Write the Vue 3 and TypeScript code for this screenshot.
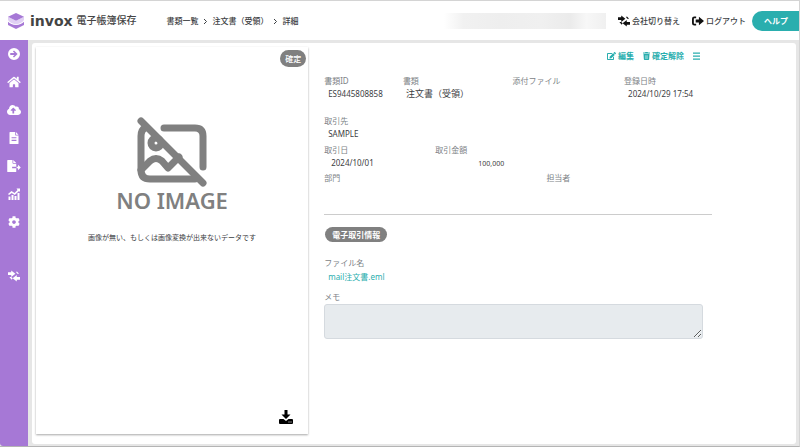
<script setup lang="ts">
interface NavItem {
  name: string
  box: string
  path: string
  wide?: boolean
  apart?: boolean
}

const swapPath =
  'M0 4h7V0l9 7-9 7v-4H0zM26 14v6h-7v4l-9-7 9-7v4zM3 14h4l3 3-2 3zM17 3l3 4h4l-4-4z'

const navItems: NavItem[] = [
  {
    name: '開く',
    box: '0 0 24 24',
    path: 'M12 0a12 12 0 1 0 0 24a12 12 0 0 0 0-24zM4.500 10.200h8.500l-3.200-3.200L12 4.800l7.200 7.200-7.200 7.200-2.200-2.200 3.200-3.200H4.500z',
  },
  {
    name: 'ホーム',
    box: '0 0 576 512',
    wide: true,
    path: 'M280.37 148.26L96 300.11V464a16 16 0 0 0 16 16l112.06-.29a16 16 0 0 0 15.92-16V368a16 16 0 0 1 16-16h64a16 16 0 0 1 16 16v95.64a16 16 0 0 0 16 16.05L464 480a16 16 0 0 0 16-16V300L295.67 148.26a12.19 12.19 0 0 0-15.3 0zM571.6 251.47L488 182.56V44.05a12 12 0 0 0-12-12h-56a12 12 0 0 0-12 12v72.61L318.47 43a48 48 0 0 0-61 0L4.34 251.47a12 12 0 0 0-1.6 16.9l25.5 31A12 12 0 0 0 45.15 301l235.22-193.74a12.19 12.19 0 0 1 15.3 0L530.9 301a12 12 0 0 0 16.9-1.6l25.5-31a12 12 0 0 0-1.7-16.93z',
  },
  {
    name: 'アップロード',
    box: '0 0 640 512',
    wide: true,
    path: 'M537.6 226.6c4.1-10.7 6.4-22.4 6.4-34.6 0-53-43-96-96-96-19.7 0-38.1 6-53.3 16.2C367 64.2 315.3 32 256 32c-88.4 0-160 71.6-160 160 0 2.7.1 5.4.2 8.1C40.2 219.8 0 273.2 0 336c0 79.5 64.5 144 144 144h368c70.7 0 128-57.3 128-128 0-61.9-44-113.6-102.4-125.4zM393.4 288H328v112c0 8.8-7.2 16-16 16h-48c-8.8 0-16-7.2-16-16V288h-65.4c-14.3 0-21.400-17.200-11.300-27.300l105.400-105.400c6.200-6.200 16.400-6.200 22.600 0l105.400 105.400c10.100 10.100 2.900 27.300-11.300 27.300z',
  },
  {
    name: '書類',
    box: '-64 0 512 512',
    path: 'M24 0h216v120c0 14 10 24 24 24h120v344c0 13-11 24-24 24H24c-13 0-24-11-24-24V24C0 11 11 0 24 0zM272 0l112 112H272zM88 220v50h208v-50zM88 330v50h208v-50z',
  },
  {
    name: '出力',
    box: '0 0 576 512',
    wide: true,
    path: 'M24 0h200v128c0 18 14 32 32 32h128v128H208v64h176v136c0 13-11 24-24 24H24c-13 0-24-11-24-24V24C0 11 11 0 24 0zM256 0l128 128H256zM400 288h60v-82l116 114-116 114v-82h-60z',
  },
  {
    name: '集計',
    box: '0 0 24 24',
    path: 'M1 17h4v7H1zM7 14h4v10H7zM13 16h4v8h-4zM19 10h4v14h-4zM0 12l7-6 6 4 6-6-2-3h7v7l-2-2-8.500 8-6-4L2 14z',
  },
  {
    name: '設定',
    box: '0 0 512 512',
    path: 'M487.4 315.7l-42.6-24.6c4.3-23.2 4.3-47 0-70.2l42.6-24.6c4.9-2.8 7.1-8.6 5.5-14-11.1-35.6-30-67.8-54.7-94.6-3.8-4.1-10-5.1-14.8-2.3L380.8 110c-17.9-15.4-38.5-27.3-60.8-35.1V25.8c0-5.6-3.9-10.5-9.4-11.7-36.7-8.2-74.3-7.8-109.2 0-5.5 1.2-9.4 6.1-9.4 11.7V75c-22.2 7.9-42.8 19.8-60.8 35.1L88.7 85.5c-4.9-2.8-11-1.9-14.8 2.3-24.7 26.7-43.6 58.9-54.7 94.6-1.7 5.4.6 11.2 5.5 14L67.3 221c-4.3 23.2-4.3 47 0 70.2l-42.6 24.6c-4.9 2.8-7.1 8.6-5.5 14 11.1 35.6 30 67.8 54.7 94.6 3.8 4.1 10 5.1 14.8 2.3l42.6-24.6c17.9 15.4 38.5 27.3 60.8 35.1v49.2c0 5.6 3.9 10.5 9.4 11.7 36.7 8.2 74.3 7.8 109.2 0 5.5-1.2 9.4-6.1 9.4-11.7v-49.2c22.2-7.9 42.8-19.8 60.8-35.1l42.6 24.6c4.9 2.8 11 1.9 14.8-2.3 24.7-26.7 43.6-58.9 54.7-94.6 1.5-5.5-.7-11.3-5.6-14.1zM256 336c-44.1 0-80-35.9-80-80s35.9-80 80-80 80 35.9 80 80-35.9 80-80 80z',
  },
  { name: '切り替え', box: '0 0 26 24', path: swapPath, apart: true },
]
</script>

<template>
  <div class="page">
    <header class="header">
      <a class="brand" href="#">
        <svg class="brand-mark" viewBox="0 0 48 48" aria-hidden="true">
          <path d="M0 11l24 12 24-12v10q-6 10-24 13Q6 31 0 21z" fill="#e0d0f4" />
          <path d="M0 11L24 0l24 11-24 12z" fill="#a678d6" />
          <path d="M0 26q8 9 24 10 16-1 24-10v10L24 48 0 36z" fill="#a678d6" />
        </svg>
        <span class="brand-name">invox</span>
        <span class="brand-sub">電子帳簿保存</span>
      </a>
      <nav class="crumbs" aria-label="breadcrumb">
        <a href="#">書類一覧</a>
        <svg viewBox="0 0 6 8" aria-hidden="true"><path d="M1 2l2.500 2.500L1 7" /></svg>
        <a href="#">注文書（受領）</a>
        <svg viewBox="0 0 6 8" aria-hidden="true"><path d="M1 2l2.500 2.500L1 7" /></svg>
        <span>詳細</span>
      </nav>
      <div class="account"></div>
      <button class="head-link" type="button">
        <svg viewBox="0 0 26 24" aria-hidden="true"><path :d="swapPath" /></svg>会社切り替え
      </button>
      <button class="head-link" type="button">
        <svg viewBox="0 0 26 24" aria-hidden="true">
          <path d="M9 2v4H5q-1 0-1 1v10q0 1 1 1h4v4H5q-5 0-5-5V7q0-5 5-5zM8 9h7V3l11 9-11 9v-6H8z" />
        </svg>ログアウト
      </button>
      <button class="help" type="button">ヘルプ</button>
    </header>

    <div class="body">
      <nav class="side" aria-label="menu">
        <a v-for="item in navItems" :key="item.name" href="#" :aria-label="item.name" :class="{ apart: item.apart }">
          <svg :class="{ wide: item.wide }" :viewBox="item.box"><path :d="item.path" fill-rule="evenodd" /></svg>
        </a>
      </nav>

      <main class="panel">
        <section class="preview">
          <span class="status">確定</span>
          <div class="empty">
            <svg class="no-image" viewBox="0 0 70 70" aria-hidden="true">
              <path d="M27 11h31q8 0 8 8v31" />
              <path d="M8 11q-4 2-4 8v34q0 9 9 9h45" />
              <path d="M4 53l9-9q6-5 12 0l6 7 11-11" />
              <circle cx="19" cy="26" r="5" />
              <path d="M4 4l62 62" />
            </svg>
            <p class="no-title">NO IMAGE</p>
            <p class="no-note">画像が無い、もしくは画像変換が出来ないデータです</p>
          </div>
          <button class="download" type="button" aria-label="ダウンロード">
            <svg viewBox="0 0 28 28">
              <path fill-rule="evenodd" d="M11 0h6v9h6l-9 9-9-9h6zM2 18h7l5 4 5-4h7q2 0 2 2v6q0 2-2 2H2q-2 0-2-2v-6q0-2 2-2zM19 23v2h2v-2zM23 23v2h2v-2z" />
            </svg>
          </button>
        </section>

        <section class="detail">
          <div class="actions">
            <button type="button">
              <svg viewBox="0 0 576 512" aria-hidden="true">
                <path d="M402.6 83.2l90.2 90.2c3.8 3.8 3.8 10 0 13.8L274.4 405.6l-92.8 10.3c-12.4 1.4-22.9-9.1-21.5-21.5l10.3-92.8L388.8 83.2c3.8-3.8 10-3.8 13.8 0zm162-22.9l-48.8-48.8c-15.2-15.2-39.9-15.2-55.2 0l-35.4 35.4c-3.8 3.8-3.8 10 0 13.8l90.2 90.2c3.8 3.8 10 3.8 13.8 0l35.400-35.400c15.200-15.300 15.200-40 0-55.200zM384 346.200V448H64V128h229.800c3.200 0 6.200-1.300 8.500-3.500l40-40c7.600-7.600 2.200-20.500-8.500-20.500H48C21.500 64 0 85.500 0 112v352c0 26.500 21.500 48 48 48h352c26.500 0 48-21.500 48-48V306.200c0-10.700-12.900-16-20.500-8.500l-40 40c-2.200 2.300-3.500 5.300-3.500 8.500z" />
              </svg>編集
            </button>
            <button type="button">
              <svg class="slim" viewBox="0 0 448 512" aria-hidden="true">
                <path fill-rule="evenodd" d="M130 32L150 0h148l20 32h114q16 0 16 16v48H0V48q0-16 16-16zM32 128h384l-22 340q-3 44-47 44H101q-44 0-47-44zM138 200v240h22V200zM213 200v240h22V200zM288 200v240h22V200z" />
              </svg>確定解除
            </button>
            <button class="more" type="button" aria-label="メニュー">
              <svg class="slim" viewBox="0 0 7 8"><path d="M0 .5h7v1.300H0zM0 3.500h7v1.300H0zM0 6.500h7v1.300H0z" /></svg>
            </button>
          </div>

          <dl class="row first">
            <div><dt>書類ID</dt><dd>ES9445808858</dd></div>
            <div><dt>書類</dt><dd class="kind">注文書（受領）</dd></div>
            <div><dt>添付ファイル</dt><dd></dd></div>
            <div><dt>登録日時</dt><dd>2024/10/29 17:54</dd></div>
          </dl>
          <dl class="row partner">
            <div><dt>取引先</dt><dd>SAMPLE</dd></div>
          </dl>
          <dl class="row quarters">
            <div><dt>取引日</dt><dd class="inset">2024/10/01</dd></div>
            <div><dt>取引金額</dt><dd class="amount">100,000</dd></div>
          </dl>
          <dl class="row halves">
            <div><dt>部門</dt><dd></dd></div>
            <div><dt>担当者</dt><dd></dd></div>
          </dl>
          <hr />

          <h2 class="tag">電子取引情報</h2>
          <dl class="file">
            <dt>ファイル名</dt>
            <dd><a href="#">mail注文書.eml</a></dd>
          </dl>
          <label class="memo-label" for="memo">メモ</label>
          <textarea id="memo" class="memo" readonly></textarea>
        </section>
      </main>
    </div>
  </div>
</template>

<style>
body {
  margin: 0;
}
</style>

<style scoped>
.page {
  box-sizing: border-box;
  min-height: 100vh;
  display: flex;
  flex-direction: column;
  border: 1px solid #d4d4d4;
  border-width: 1px 1px 1px 0;
  border-bottom-color: #b4b4b4;
  background: #e6e6e6;
  color: #3c4043;
  font: 8px/13px "Noto Sans", "Noto Sans CJK JP", sans-serif;
}
a {
  color: inherit;
  text-decoration: none;
}
button {
  display: flex;
  align-items: center;
  padding: 0;
  border: 0;
  background: none;
  color: inherit;
  font: inherit;
  white-space: nowrap;
  cursor: pointer;
}
svg {
  display: block;
  flex: none;
  fill: currentColor;
}
p,
dl,
dd,
h2 {
  margin: 0;
}
.header {
  display: flex;
  align-items: center;
  height: 39px;
  padding-left: 8px;
  background: #fff;
  font-weight: 500;
}
.brand {
  display: flex;
  align-items: center;
  gap: 4px;
  white-space: nowrap;
}
.brand-mark {
  width: 16px;
  height: 16px;
}
.brand-name {
  padding-left: 2px;
  font: bold 14px/20px "DejaVu Sans", sans-serif;
  color: #444;
}
.brand-sub {
  font-size: 10px;
  font-weight: 500;
  color: #444;
}
.crumbs {
  display: flex;
  align-items: center;
  gap: 4px;
  margin-left: 30px;
  white-space: nowrap;
}
.crumbs svg {
  width: 6px;
  height: 8px;
  fill: none;
  stroke: currentColor;
}
.account {
  width: 162px;
  height: 16px;
  margin-left: auto;
  background: linear-gradient(90deg, #fff, #f1f1f1 12%, #eee 35%, #f0f0f0 60%, #ebebeb 78%, #f7f7f7 88%, #f0f0f0);
}
.head-link {
  gap: 2px;
  margin-left: 12px;
}
.head-link svg {
  width: 12px;
  height: 12px;
  fill: #111;
}
.help {
  height: 20px;
  margin-left: 6px;
  padding: 0 11px 0 12px;
  border-radius: 10px 0 0 10px;
  background: #2aaeae;
  color: #fff;
  font-weight: 700;
}
.body {
  flex: 1;
  display: flex;
}
.side {
  width: 28px;
  flex: none;
  border-bottom-left-radius: 3px;
  background: #a678d6;
  color: #fff;
}
.side a {
  display: grid;
  place-items: center;
  height: 28px;
}
.side .apart {
  margin-top: 26px;
}
.side svg {
  width: 12px;
  height: 12px;
}
.side .wide {
  width: 14px;
}
.panel {
  flex: 1;
  display: flex;
  margin: 3px 3px 2px 4px;
  padding: 4px;
  border-radius: 3px;
  background: #fff;
}
.preview {
  position: relative;
  flex: 0 0 36%;
  display: flex;
  flex-direction: column;
  align-items: center;
  margin-bottom: 6px;
  box-shadow: 0 1px 2px rgba(0, 0, 0, 0.35);
}
.status {
  position: absolute;
  top: 3px;
  right: 2px;
  padding: 2px 5px;
  border-radius: 9px;
  background: #808080;
  color: #fff;
  font-weight: 500;
}
.empty {
  display: flex;
  flex-direction: column;
  align-items: center;
  padding-top: 70px;
}
.no-image {
  width: 70px;
  height: 70px;
  fill: none;
  stroke: #808080;
  stroke-width: 7px;
  stroke-linecap: round;
  stroke-linejoin: round;
}
.no-title {
  font-size: 22px;
  line-height: 26px;
  font-weight: 600;
  color: #808080;
}
.no-note {
  margin-top: 18px;
  font-size: 7px;
}
.download {
  position: absolute;
  right: 15px;
  bottom: 10px;
}
.download svg {
  width: 14px;
  height: 14px;
  fill: #000;
}
.detail {
  flex: 1;
  padding-left: 16px;
}
.actions {
  box-sizing: border-box;
  display: flex;
  justify-content: flex-end;
  gap: 9px;
  width: 81%;
  padding: 2px 3px 0 0;
  color: #2aaeae;
  font-weight: 700;
}
.actions button {
  gap: 2px;
}
.actions svg {
  width: 9px;
  height: 8px;
}
.actions .slim {
  width: 7px;
}
.row {
  display: grid;
  width: 95%;
}
.first {
  grid-template-columns: 79fr 110fr 112fr 145fr;
  margin-top: 12px;
}
.partner {
  margin: 14px 0 3px;
}
.quarters {
  grid-template-columns: 1fr 1fr 2fr;
}
.halves {
  grid-template-columns: 1fr 1fr;
  margin-top: 2px;
}
dt,
.memo-label {
  color: #7d8286;
}
dd {
  min-height: 13px;
  padding-left: 4px;
}
.kind {
  padding-left: 3px;
  font-size: 9px;
}
.inset {
  padding-left: 7px;
}
.amount {
  box-sizing: border-box;
  width: 69px;
  padding: 2px 0 0;
  font-size: 7px;
  line-height: 11px;
  text-align: right;
}
hr {
  width: 83%;
  height: 1px;
  margin: 17px 0 12px;
  border: 0;
  background: #ccc;
}
.tag {
  width: max-content;
  margin-left: 1px;
  padding: 1px 7px;
  border-radius: 8px;
  background: #808080;
  color: #fff;
  font-size: 8px;
  font-weight: 700;
}
.file {
  margin: 14px 0 7px;
}
.file dd {
  margin-top: 1px;
  color: #2aaeae;
}
.memo-label {
  display: block;
}
.memo {
  display: block;
  box-sizing: border-box;
  width: 81%;
  height: 35px;
  margin-top: 1px;
  border: 1px solid #d5dadf;
  border-radius: 3px;
  background: #e7ebee;
  font: inherit;
  outline: 0;
}
</style>
